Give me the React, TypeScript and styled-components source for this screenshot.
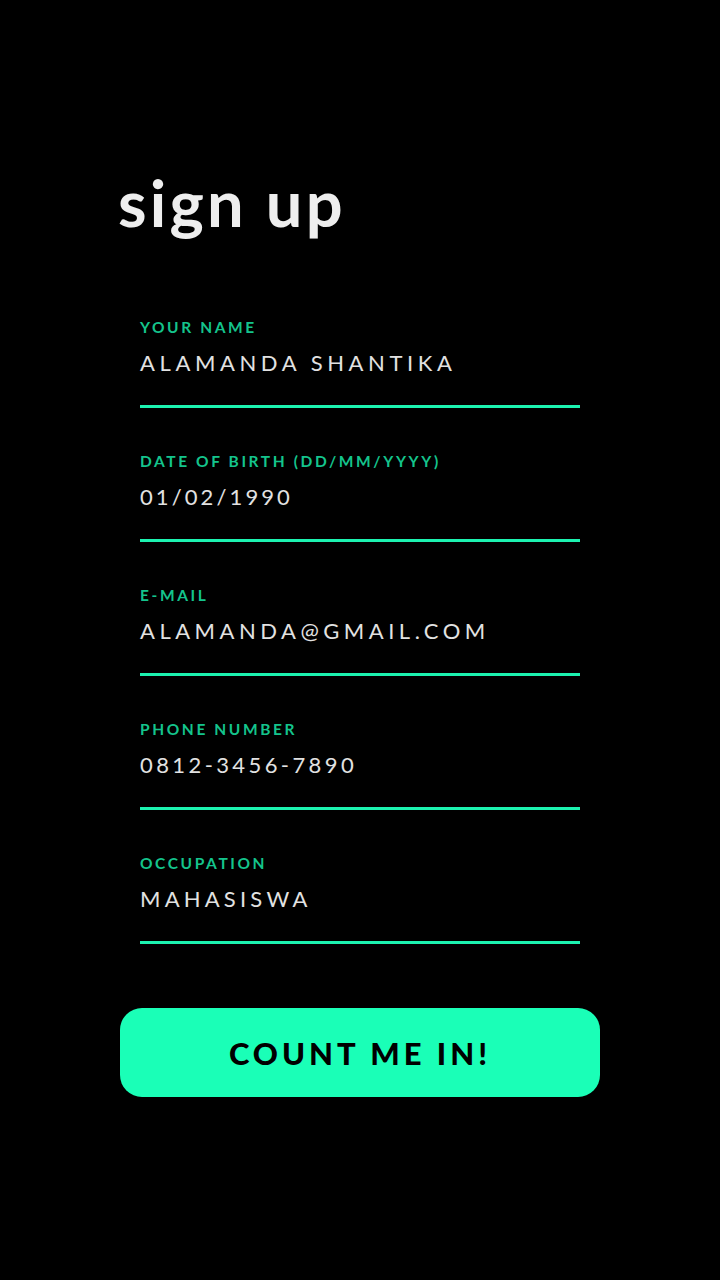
import React from "react";
import styled, { createGlobalStyle } from "styled-components";

const Global = createGlobalStyle`
  html, body { margin: 0; padding: 0; background: #000; }
  body { font-family: Lato, "Noto Sans", sans-serif; }
`;

const Page = styled.div`
  width: 720px;
  min-height: 1280px;
  background: #000;
  box-sizing: border-box;
  padding: 170px 120px 0;
  display: flex;
  flex-direction: column;
`;

const Title = styled.h1`
  margin: 0 0 83px -2px;
  font-size: 65px;
  line-height: 64px;
  font-weight: 700;
  color: #eeeeee;
  letter-spacing: 3.2px;
`;

const Form = styled.form`
  display: flex;
  flex-direction: column;
  gap: 43px;
  padding: 0 20px;
`;

const Field = styled.div`
  display: flex;
  flex-direction: column;
  border-bottom: 3px solid #1cf2b0;
  padding-bottom: 27px;
`;

const Label = styled.label`
  font-size: 15.5px;
  line-height: 20px;
  font-weight: 700;
  color: #14c48c;
  letter-spacing: 2.6px;
  margin-bottom: 11px;
`;

const Value = styled.div<{ $spacing: number }>`
  font-size: 22px;
  line-height: 30px;
  font-weight: 400;
  color: #e2e2e2;
  letter-spacing: ${(p) => p.$spacing}px;
`;

const Button = styled.button`
  margin-top: 64px;
  height: 89px;
  width: 480px;
  border: none;
  border-radius: 22px;
  background: #1affb7;
  color: #000;
  font-family: Lato, "Noto Sans", sans-serif;
  font-size: 31px;
  font-weight: 900;
  letter-spacing: 4px;
  cursor: pointer;
`;

const fields = [
  { label: "YOUR NAME", value: "ALAMANDA SHANTIKA", spacing: 4.6 },
  { label: "DATE OF BIRTH (DD/MM/YYYY)", value: "01/02/1990", spacing: 3.1 },
  { label: "E-MAIL", value: "ALAMANDA@GMAIL.COM", spacing: 4.5 },
  { label: "PHONE NUMBER", value: "0812-3456-7890", spacing: 3.4 },
  { label: "OCCUPATION", value: "MAHASISWA", spacing: 4.2 },
];

export default function App() {
  return (
    <>
      <Global />
      <Page>
        <Title>sign up</Title>
        <Form onSubmit={(e) => e.preventDefault()}>
          {fields.map((f) => (
            <Field key={f.label}>
              <Label>{f.label}</Label>
              <Value $spacing={f.spacing}>{f.value}</Value>
            </Field>
          ))}
        </Form>
        <Button type="button">COUNT ME IN!</Button>
      </Page>
    </>
  );
}
